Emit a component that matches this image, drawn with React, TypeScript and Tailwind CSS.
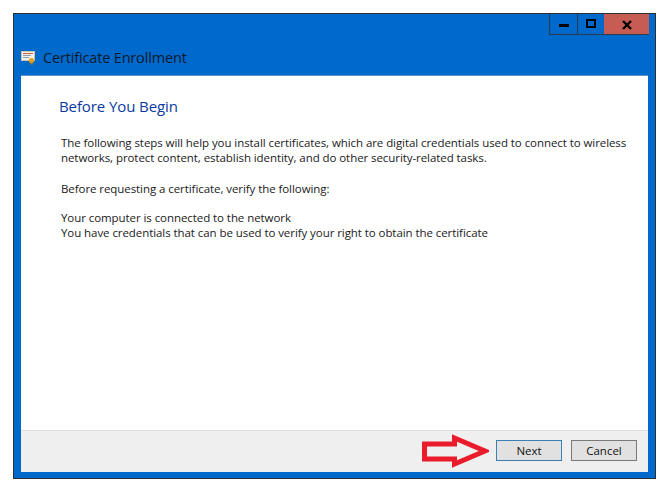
export default function App() {
  return (
    <div className="w-[669px] h-[493px] bg-white pt-[13px] pl-[13px] font-['Open_Sans',sans-serif] overflow-hidden">
      <div className="w-[643px] h-[466px] bg-[#0069cc] border border-[#2a2f36] flex flex-col">
        <div className="h-[61px] shrink-0 flex flex-col">
          <div className="flex justify-end pr-[6px]">
            <div className="flex h-[21px] border-b border-[#2a3a4c]">
              <div className="w-[28px] border-l border-[#2a3a4c] flex items-center justify-center">
                <div className="w-[10px] h-[3px] bg-black mt-[3px]" />
              </div>
              <div className="w-[27px] border-l border-[#2a3a4c] flex items-center justify-center">
                <div className="w-[10px] h-[9px] border-2 border-black mb-[1px]" />
              </div>
              <div className="w-[45px] bg-[#c75c52] flex items-center justify-center">
                <svg width="10" height="10" viewBox="0 0 10 10" className="mt-[1px]">
                  <path d="M1 1 L9 9 M9 1 L1 9" stroke="#000" strokeWidth="2.4" />
                </svg>
              </div>
            </div>
          </div>
          <div className="flex items-center ml-[7px] mt-[13px] gap-[7px]">
            <svg width="15" height="14" viewBox="0 0 15 14">
              <rect x="0.5" y="0.5" width="13" height="9" fill="#f6f1e4" stroke="#c9c2ae" />
              <rect x="2" y="2" width="10" height="1" fill="#c0623a" />
              <rect x="2" y="4" width="8" height="1" fill="#8a9bb5" />
              <rect x="2" y="6" width="6" height="1" fill="#8a9bb5" />
              <circle cx="10.5" cy="9.5" r="2.6" fill="#e0a020" />
              <path d="M9.5 11.5 L9.5 14 L10.5 13 L11.5 14 L11.5 11.5 Z" fill="#c07a10" />
            </svg>
            <span className="text-[14.5px] leading-[20px] text-[#0a1a2c] tracking-[-0.16px]">Certificate Enrollment</span>
          </div>
        </div>
        <div className="h-[1px] ml-[7px] mr-[7px] bg-[#5f93c8] shrink-0" />
        <div className="mx-[7px] h-[396px] bg-white flex flex-col">
          <div className="h-[354px] shrink-0 pl-[38px] pt-[20px] pr-[16px]">
            <div className="text-[15px] leading-[20px] text-[#0a3a9e] tracking-[-0.1px]">Before You Begin</div>
            <div className="ml-[2px] mt-[19px] text-[11.5px] leading-[15px] text-[#1a1a1a] tracking-[-0.07px] whitespace-nowrap">
              <p>The following steps will help you install certificates, which are digital credentials used to connect to wireless</p>
              <p>networks, protect content, establish identity, and do other security-related tasks.</p>
              <p className="mt-[16px]">Before requesting a certificate, verify the following:</p>
              <p className="mt-[14px]">Your computer is connected to the network</p>
              <p>You have credentials that can be used to verify your right to obtain the certificate</p>
            </div>
          </div>
          <div className="flex-1 bg-[#efefef] border-t border-[#dfdfdf] flex items-center justify-end pr-[11px] pb-[2px]">
            <svg width="68" height="34" viewBox="0 0 68 34" className="mr-[7px]">
              <path d="M3.5 10 H33.5 V4 L64 17 L33.5 30 V25 H3.5 Z" fill="none" stroke="#ea1c2c" strokeWidth="5" strokeLinejoin="miter" />
            </svg>
            <button className="w-[66px] h-[21px] bg-[#e1e1e1] border border-[#3c7fb1] text-[11.5px] text-[#111] flex items-center justify-center">Next</button>
            <button className="w-[66px] h-[21px] ml-[9px] bg-[#e1e1e1] border border-[#7a7a7a] text-[11.5px] text-[#111] flex items-center justify-center">Cancel</button>
          </div>
        </div>
      </div>
    </div>
  );
}
